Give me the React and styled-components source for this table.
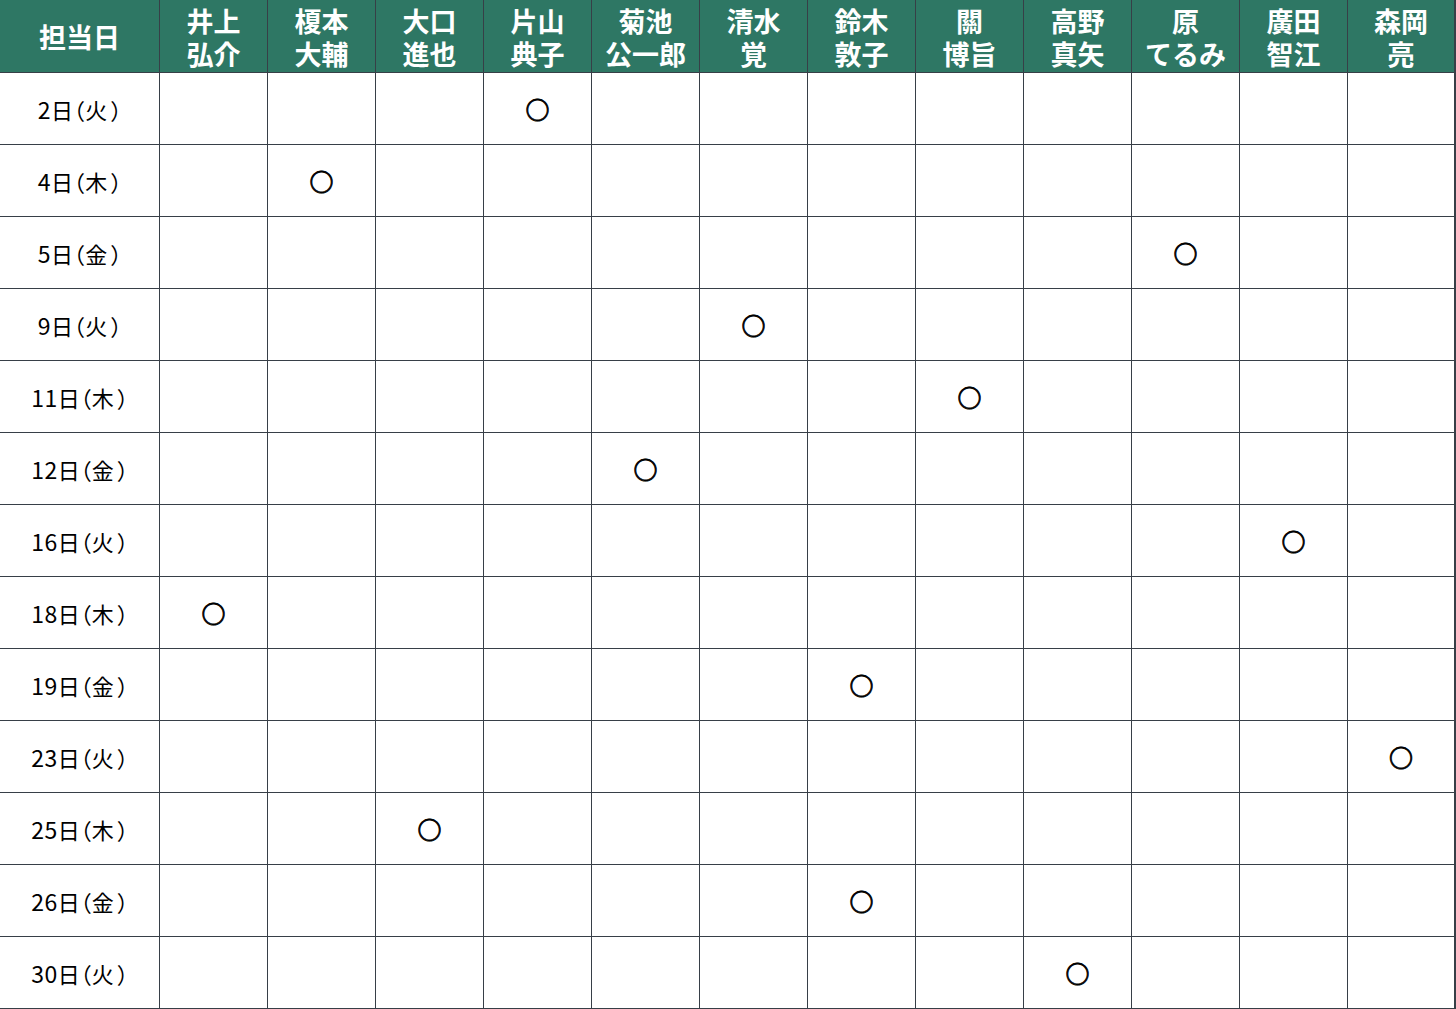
import React from "react";
import styled, { createGlobalStyle } from "styled-components";

const Global = createGlobalStyle`
  html, body { margin: 0; padding: 0; background: #ffffff; }
  body { font-family: "Noto Sans CJK JP", "Noto Sans", sans-serif; }
`;

const LINE = "#373f47";

const Grid = styled.div`
  display: grid;
  grid-template-columns: 160px repeat(12, 108px);
  grid-template-rows: 73px repeat(13, 72px);
  width: 1456px;
`;

const Cell = styled.div`
  box-sizing: border-box;
  display: flex;
  align-items: center;
  justify-content: center;
  border-right: ${(p) => (p.$lastCol ? 2 : 1)}px solid ${LINE};
  border-bottom: ${(p) => (p.$lastRow ? 2 : 1)}px solid ${LINE};
  height: ${(p) => (p.$lastRow ? 73 : undefined)}px;
`;

const HeadCell = styled(Cell)`
  background: #2e7764;
  color: #ffffff;
  font-family: "Liberation Sans", "Noto Sans CJK JP", sans-serif;
  font-weight: 700;
  font-size: 27px;
  line-height: 33px;
  text-align: center;
  padding-top: 7px;
`;

const DateCell = styled(Cell)`
  font-size: 22px;
  color: #000000;
  padding-top: 1px;
  white-space: nowrap;
  font-feature-settings: "halt";
`;

const Digits = styled.span`
  font-size: 23px;
  letter-spacing: 0.5px;
`;

const Paren = styled.span`
  display: inline-block;
  margin-left: ${(p) => (p.$open ? 1 : 3)}px;
`;

const Mark = styled.span`
  font-size: 24px;
  font-weight: 900;
  line-height: 1;
  color: #000;
  -webkit-text-stroke: 0.8px #000;
`;

const people = [
  ["井上", "弘介"],
  ["榎本", "大輔"],
  ["大口", "進也"],
  ["片山", "典子"],
  ["菊池", "公一郎"],
  ["清水", "覚"],
  ["鈴木", "敦子"],
  ["關", "博旨"],
  ["高野", "真矢"],
  ["原", "てるみ"],
  ["廣田", "智江"],
  ["森岡", "亮"],
];

const rows = [
  ["2", "火", 3],
  ["4", "木", 1],
  ["5", "金", 9],
  ["9", "火", 5],
  ["11", "木", 7],
  ["12", "金", 4],
  ["16", "火", 10],
  ["18", "木", 0],
  ["19", "金", 6],
  ["23", "火", 11],
  ["25", "木", 2],
  ["26", "金", 6],
  ["30", "火", 8],
];

export default function App() {
  return (
    <>
      <Global />
      <Grid>
        <HeadCell>担当日</HeadCell>
        {people.map((p, i) => (
          <HeadCell key={i} $lastCol={i === 11}>
            <span>
              {p[0]}
              <br />
              {p[1]}
            </span>
          </HeadCell>
        ))}
        {rows.map((r, ri) => {
          const last = ri === rows.length - 1;
          return (
            <React.Fragment key={ri}>
              <DateCell $lastRow={last}>
                <Digits>{r[0]}</Digits>日<Paren $open>（</Paren>
                {r[1]}
                <Paren>）</Paren>
              </DateCell>
              {people.map((_, ci) => (
                <Cell key={ci} $lastRow={last} $lastCol={ci === 11}>
                  {r[2] === ci ? <Mark>○</Mark> : null}
                </Cell>
              ))}
            </React.Fragment>
          );
        })}
      </Grid>
    </>
  );
}
